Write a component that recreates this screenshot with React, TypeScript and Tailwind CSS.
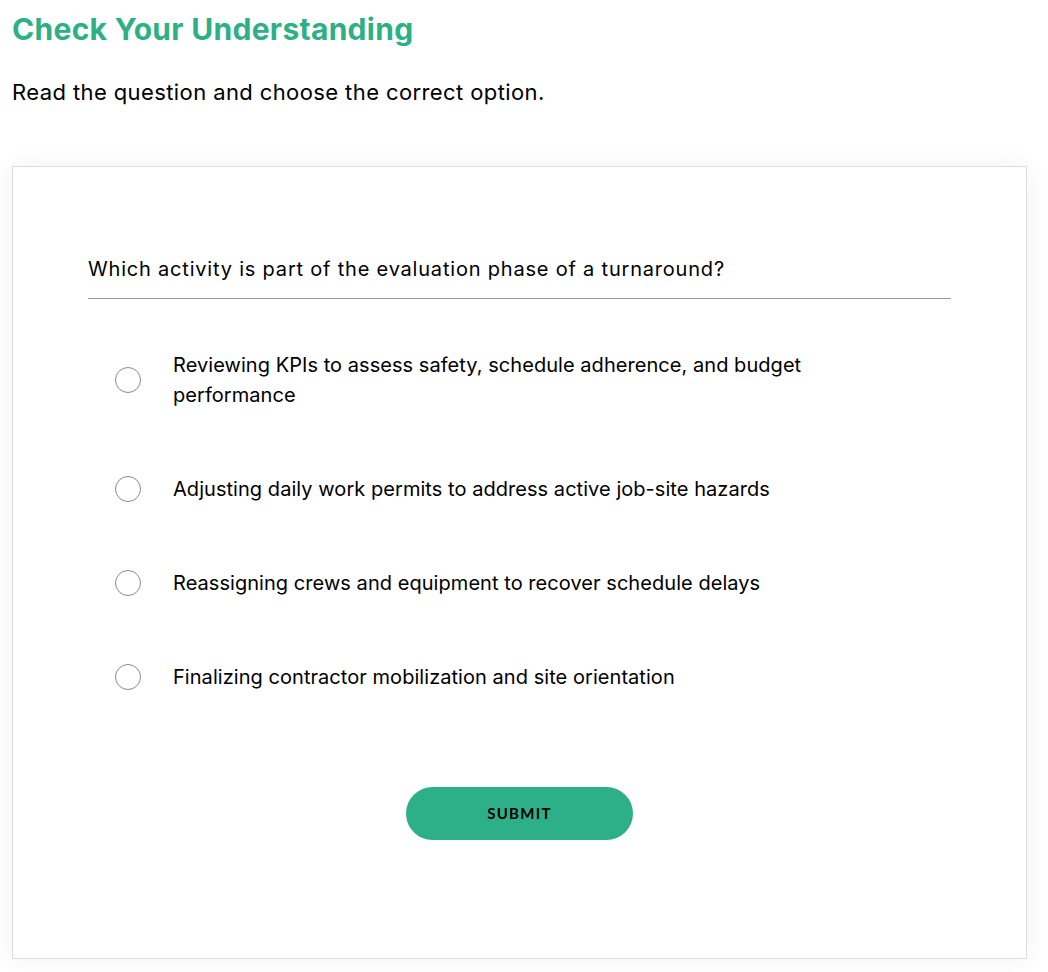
import React, { useState } from 'react';

const options = [
  'Reviewing KPIs to assess safety, schedule adherence, and budget performance',
  'Adjusting daily work permits to address active job-site hazards',
  'Reassigning crews and equipment to recover schedule delays',
  'Finalizing contractor mobilization and site orientation',
];

export default function App() {
  const [selected, setSelected] = useState<number | null>(null);

  return (
    <div className="min-h-[972px] bg-white px-3 pt-[8px] pb-3 font-['Inter','Noto_Sans',sans-serif] text-black">
      <h1 className="text-[30px] font-bold leading-[42px] tracking-[0.3px] text-[#2eb086]">
        Check Your Understanding
      </h1>
      <p className="mt-[27px] text-[22px] leading-[30px] tracking-[0.4px]">
        Read the question and choose the correct option.
      </p>

      <div className="mt-[59px] w-[1015px] border border-[#dddddd] bg-white shadow-[0_0_24px_rgba(0,0,0,0.06)]">
        <div className="px-[75px] pt-[88px] pb-[118px]">
          <div className="border-b border-[#999999] pb-[15px] text-[20px] leading-[28px] tracking-[0.8px]">
            Which activity is part of the evaluation phase of a turnaround?
          </div>

          <div className="mt-[51px] flex flex-col gap-[64px] pl-[27px]">
            {options.map((opt, i) => (
              <label key={i} className="flex cursor-pointer items-center gap-[32px]">
                <span
                  onClick={() => setSelected(i)}
                  className="flex h-[26px] w-[26px] shrink-0 items-center justify-center rounded-full border border-[#8a8a8a] bg-white"
                >
                  {selected === i && <span className="h-[14px] w-[14px] rounded-full bg-[#2eb086]" />}
                </span>
                <span className="max-w-[680px] text-[20px] leading-[30px] tracking-[0.05px]">{opt}</span>
              </label>
            ))}
          </div>

          <div className="mt-[95px] flex justify-center">
            <button className="h-[53px] w-[227px] rounded-full bg-[#2db087] font-['Lato',sans-serif] text-[15px] font-bold tracking-[1.3px] text-black">
              SUBMIT
            </button>
          </div>
        </div>
      </div>
    </div>
  );
}
